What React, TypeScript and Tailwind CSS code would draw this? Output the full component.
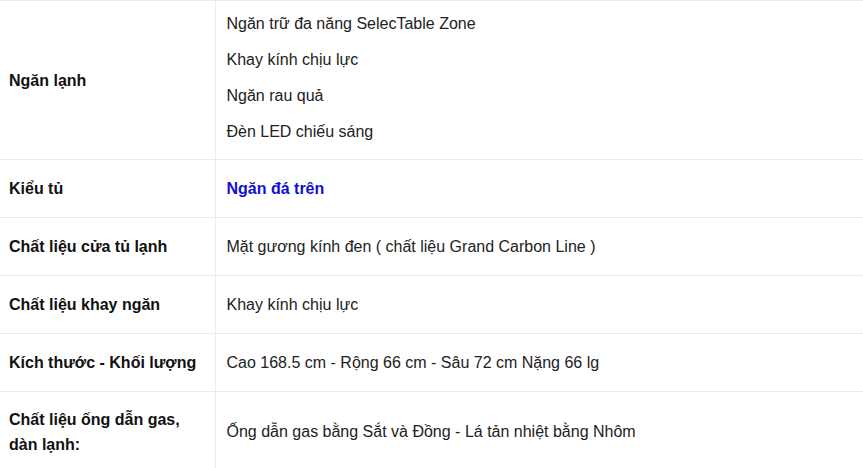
import React from "react";

type Row = { label: string[]; values: string[]; highlight?: boolean; height: string };

const rows: Row[] = [
  {
    label: ["Ngăn lạnh"],
    values: ["Ngăn trữ đa năng SelecTable Zone", "Khay kính chịu lực", "Ngăn rau quả", "Đèn LED chiếu sáng"],
    height: "h-[159px]",
  },
  { label: ["Kiểu tủ"], values: ["Ngăn đá trên"], highlight: true, height: "h-[58px]" },
  { label: ["Chất liệu cửa tủ lạnh"], values: ["Mặt gương kính đen ( chất liệu Grand Carbon Line )"], height: "h-[58px]" },
  { label: ["Chất liệu khay ngăn"], values: ["Khay kính chịu lực"], height: "h-[58px]" },
  { label: ["Kích thước - Khối lượng"], values: ["Cao 168.5 cm - Rộng 66 cm - Sâu 72 cm Nặng 66 lg"], height: "h-[58px]" },
  {
    label: ["Chất liệu ống dẫn gas,", "dàn lạnh:"],
    values: ["Ống dẫn gas bằng Sắt và Đồng - Lá tản nhiệt bằng Nhôm"],
    height: "h-[80px]",
  },
];

export default function App() {
  return (
    <div className="w-[863px] h-[468px] overflow-hidden bg-white font-['Liberation_Sans',Arial,sans-serif] text-[16px] text-[#222]">
      <table className="w-full border-collapse">
        <tbody>
          {rows.map((row, i) => (
            <tr key={i} className={`${row.height} border-t border-[#ebebeb]`}>
              <td className="w-[215px] border-r border-[#ebebeb] pl-[9px] pr-2 align-middle font-bold leading-[25px] text-[#111]">
                {row.label.map((l) => (
                  <div key={l}>{l}</div>
                ))}
              </td>
              <td className="pl-[11px] pr-2 align-middle">
                {row.values.length > 1 ? (
                  <div className="pt-[5px] pb-[9px]">
                    {row.values.map((v) => (
                      <div key={v} className="leading-[36px]">
                        {v}
                      </div>
                    ))}
                  </div>
                ) : (
                  <div className={row.highlight ? "font-bold text-[#1010d0]" : ""}>{row.values[0]}</div>
                )}
              </td>
            </tr>
          ))}
        </tbody>
      </table>
    </div>
  );
}
